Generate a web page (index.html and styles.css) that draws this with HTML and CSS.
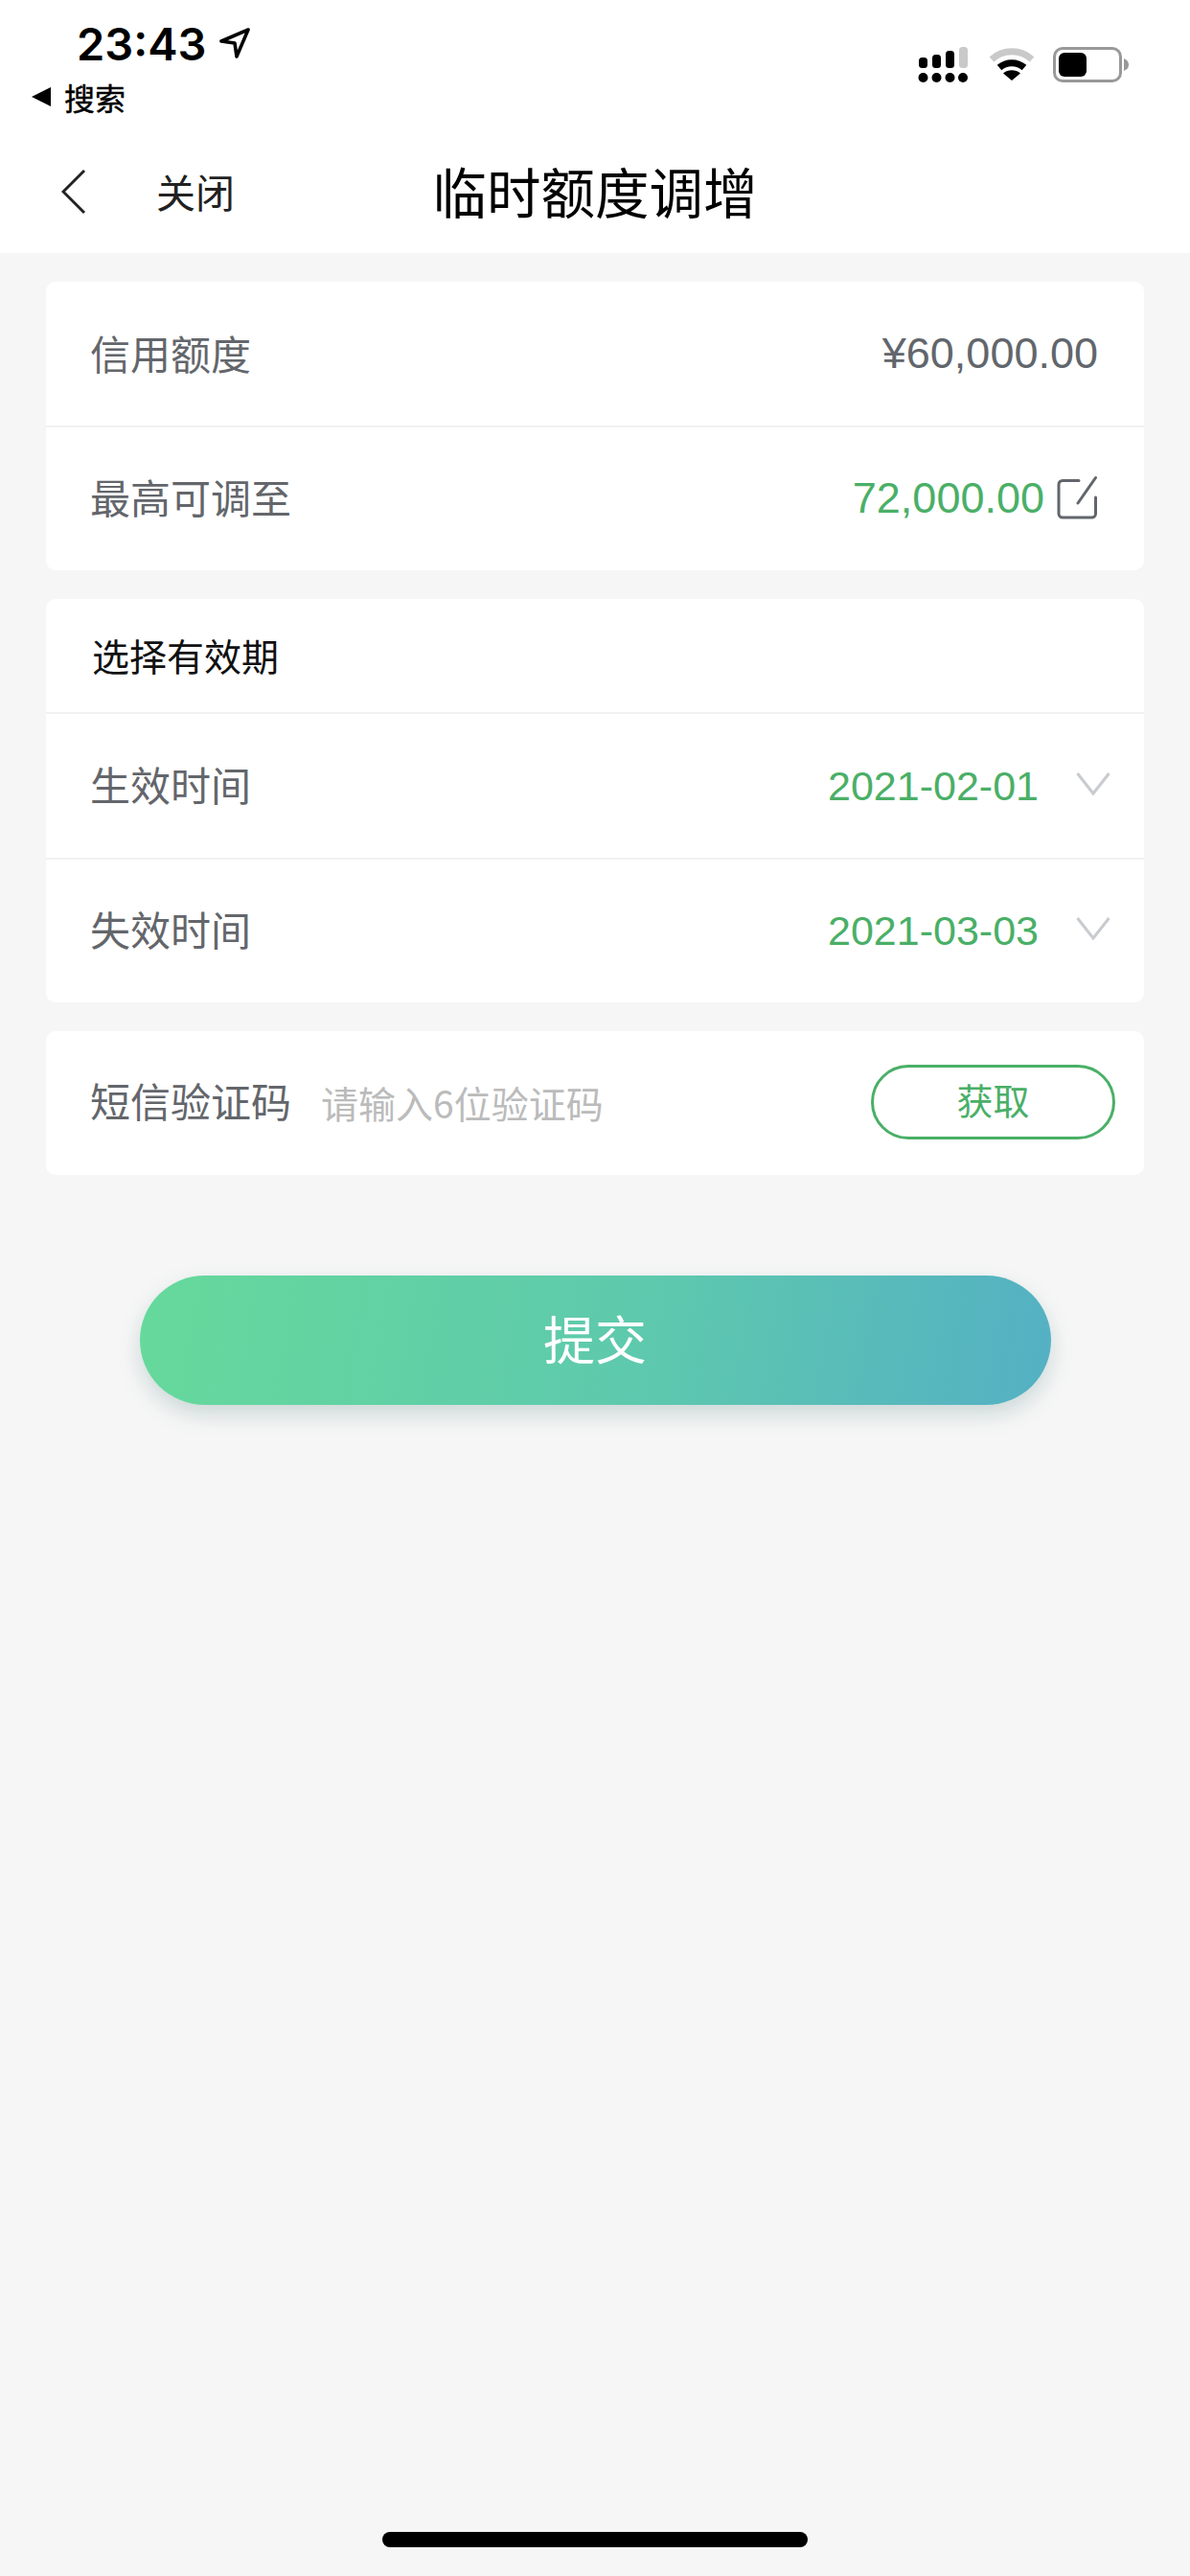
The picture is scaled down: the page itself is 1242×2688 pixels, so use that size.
FILE: index.html
```html
<!DOCTYPE html>
<html lang="zh">
<head>
<meta charset="utf-8">
<title>临时额度调增</title>
<link rel="stylesheet" href="styles.css">
</head>
<body>
<div class="page">
  <header class="top">
    <div class="status">
      <div class="status-left">
        <div class="clock-line">
          <span class="clock">23:43</span>
          <svg class="loc" width="34" height="34" viewBox="0 0 34 34"><path d="M31 3 3 15 17 17 19 31Z" fill="none" stroke="#000" stroke-width="3.600" stroke-linejoin="round"/></svg>
        </div>
        <div class="back-app">
          <svg class="back-tri" width="22" height="22" viewBox="0 0 22 22"><path d="M21 1V21L1 11Z" fill="#000"/></svg>
          <span>搜索</span>
        </div>
      </div>
      <div class="status-right">
        <svg width="52" height="38" viewBox="0 0 52 38">
          <g fill="#000">
            <rect x="1" y="11" width="9" height="11" rx="3.500"/>
            <rect x="15" y="8" width="9" height="14" rx="3.500"/>
            <rect x="29" y="4" width="9" height="18" rx="3.500"/>
            <circle cx="5.500" cy="32" r="5"/><circle cx="19.500" cy="32" r="5"/><circle cx="33.500" cy="32" r="5"/><circle cx="47" cy="32" r="5"/>
          </g>
          <rect x="43" y="0" width="9" height="22" rx="3.500" fill="#c9c9c9"/>
        </svg>
        <svg class="wifi" width="48" height="36" viewBox="0 0 48 36">
          <path d="M3 13A31 31 0 0 1 45 13" fill="none" stroke="#c9c9c9" stroke-width="7"/>
          <path d="M11 21.500A20 20 0 0 1 37 21.500" fill="none" stroke="#000" stroke-width="7"/>
          <path d="M24 35 15 27.500A14 14 0 0 1 33 27.500Z" fill="#000"/>
        </svg>
        <svg class="batt" width="80" height="38" viewBox="0 0 80 38">
          <rect x="1.500" y="1.500" width="69" height="34" rx="8.500" fill="none" stroke="#999" stroke-width="3"/>
          <rect x="6" y="6" width="29" height="25" rx="6" fill="#000"/>
          <path d="M74 12Q79 14 79 18.500T74 25Z" fill="#999"/>
        </svg>
      </div>
    </div>
    <nav class="nav">
      <div class="nav-left">
        <svg class="back" width="26" height="48" viewBox="0 0 26 48"><path d="M24 2 2 24 24 46" fill="none" stroke="#222" stroke-width="3"/></svg>
        <span class="close">关闭</span>
      </div>
      <h1 class="title">临时额度调增</h1>
    </nav>
  </header>

  <main class="content">
    <section class="card">
      <div class="row">
        <span class="label">信用额度</span>
        <span class="amount">¥60,000.00</span>
      </div>
      <div class="row">
        <span class="label">最高可调至</span>
        <div class="value-line">
          <span class="amount green">72,000.00</span>
          <svg class="edit" width="42" height="46" viewBox="0 0 42 46"><path d="M23 5.500H6A4 4 0 0 0 2 9.500V40A4 4 0 0 0 6 44H36.500A4 4 0 0 0 40.500 40V23M22 29 40.500 2.500" fill="none" stroke="#62666c" stroke-width="3" stroke-linecap="round"/></svg>
        </div>
      </div>
    </section>

    <section class="card">
      <div class="card-head">选择有效期</div>
      <div class="row">
        <span class="label">生效时间</span>
        <div class="date-line">
          <span class="date">2021-02-01</span>
          <svg class="chev" width="36" height="26" viewBox="0 0 36 26"><path d="M1.500 2 18 23 34.500 2" fill="none" stroke="#c8cbd0" stroke-width="3"/></svg>
        </div>
      </div>
      <div class="row">
        <span class="label">失效时间</span>
        <div class="date-line">
          <span class="date">2021-03-03</span>
          <svg class="chev" width="36" height="26" viewBox="0 0 36 26"><path d="M1.500 2 18 23 34.500 2" fill="none" stroke="#c8cbd0" stroke-width="3"/></svg>
        </div>
      </div>
    </section>

    <section class="card">
      <div class="row code-row">
        <span class="label">短信验证码</span>
        <span class="placeholder">请输入6位验证码</span>
        <span class="get-code">获取</span>
      </div>
    </section>

    <div class="submit">提交</div>
  </main>

  <div class="home-wrap"><div class="home"></div></div>
</div>
</body>
</html>
```
FILE: styles.css
```css
* { box-sizing: border-box; }
html, body { margin: 0; padding: 0; }
body {
  width: 1242px;
  height: 2688px;
  overflow: hidden;
  background: #f6f6f6;
  font-family: "Liberation Sans", "Noto Sans CJK SC", sans-serif;
}
.page { display: flex; flex-direction: column; height: 2688px; }

.top { background: #fff; height: 264px; flex: none; }
.status { height: 126px; display: flex; justify-content: space-between; }
.status-left { padding: 23px 0 0 32px; }
.clock-line { display: flex; align-items: center; gap: 13px; padding-left: 48px; height: 46px; }
.clock { font-family: "Inter", sans-serif; font-weight: 600; font-size: 47px; line-height: 46px; color: #000; }
.loc { margin-top: -2px; }
.back-app { display: flex; align-items: center; gap: 13px; margin-top: 12px; height: 40px; font-family: "Noto Sans CJK SC", sans-serif; font-size: 32px; line-height: 40px; color: #000; -webkit-text-stroke: 0.4px #000; }
.status-right { display: flex; align-items: flex-start; padding: 49px 0 0 0; margin-right: 63px; }
.wifi { margin-left: 22px; }
.batt { margin-left: 19px; }

.nav { height: 138px; display: flex; align-items: center; padding: 8px 0 0 64px; position: relative; }
.nav-left { display: flex; align-items: center; gap: 73px; }
.back { margin-top: 2px; }
.close { font-family: "Noto Sans CJK SC", sans-serif; font-size: 41px; line-height: 48px; color: #222; }
.title { position: absolute; left: 0; right: 0; top: 6px; bottom: 0; margin: 0; display: flex; align-items: center; justify-content: center; font-family: "Noto Sans CJK SC", sans-serif; font-weight: 400; font-size: 56.500px; color: #000; }

.content { flex: 1; padding: 30px 48px 0; display: flex; flex-direction: column; gap: 30px; }
.card { background: #fff; border-radius: 10px; }
.row { height: 150px; display: flex; align-items: center; justify-content: space-between; padding: 0 48px 0 46px; }
.row:last-child { height: 151px; padding-bottom: 2px; }
.row + .row { border-top: 2px solid #f1f1f1; }
.card-head { height: 120px; padding: 0 0 2px 48px; display: flex; align-items: center; font-family: "Noto Sans CJK SC", sans-serif; font-size: 39px; color: #111; border-bottom: 2px solid #f1f1f1; }
.card-head + .row { height: 149.500px; }
.label { font-family: "Noto Sans CJK SC", sans-serif; font-size: 42px; color: #63666b; position: relative; top: -2px; }
.amount { font-size: 45px; color: #62666c; }
.green { color: #4aaf67; }
.value-line { display: flex; align-items: center; gap: 13px; }
.edit { margin-right: 1px; margin-top: -2px; }
.date-line { display: flex; align-items: center; gap: 39px; margin-right: -13px; }
.date { font-size: 43px; color: #4aaf67; position: relative; top: 1px; }
.chev { margin-top: -3px; }

.row.code-row { height: 150px; justify-content: flex-start; padding-right: 30px; }
.placeholder { margin-left: 31px; flex: 1; font-family: "Noto Sans CJK SC", sans-serif; font-size: 39px; color: #bbb; }
.get-code {
  width: 255px; height: 78px;
  border: 3px solid #4aaf67; border-radius: 39px;
  display: flex; align-items: center; justify-content: center;
  padding-bottom: 6px;
  font-family: "Noto Sans CJK SC", sans-serif; font-size: 38px; color: #4aaf67;
}

.submit {
  align-self: center;
  width: 951px; height: 135px;
  margin-top: 75.500px;
  padding-bottom: 7px;
  border-radius: 68px;
  background: linear-gradient(100deg, #66d99b 0%, #5ec9ad 55%, #54b0c4 100%);
  box-shadow: 0 10px 22px rgba(90, 130, 130, 0.26);
  display: flex; align-items: center; justify-content: center;
  font-family: "Noto Sans CJK SC", sans-serif; font-size: 54px; color: #fff;
}

.home-wrap { flex: none; height: 46px; display: flex; justify-content: center; }
.home { width: 444px; height: 16px; border-radius: 8px; background: #000; }
```
